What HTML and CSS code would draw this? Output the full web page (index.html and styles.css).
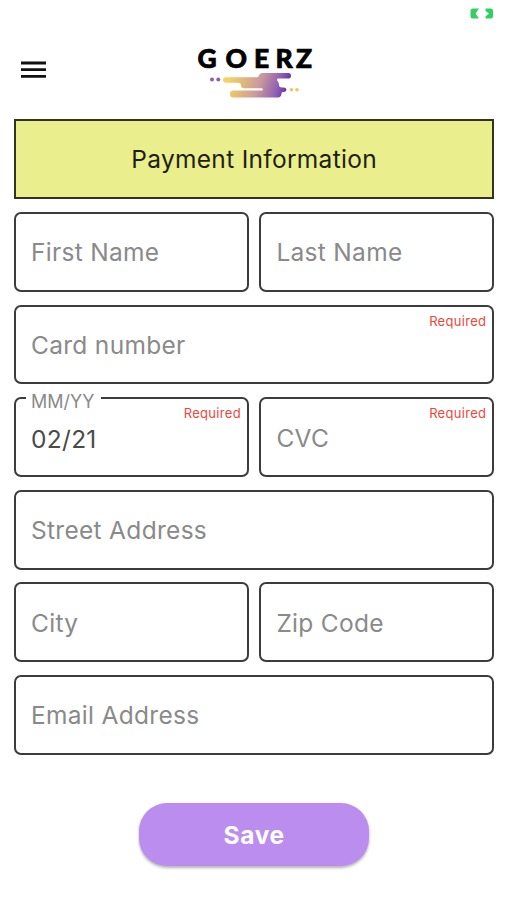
FILE: index.html
```html
<!DOCTYPE html>
<html lang="en">
<head>
  <meta charset="UTF-8">
  <meta name="viewport" content="width=device-width, initial-scale=1.0">
  <title>Payment Information</title>
  <link rel="stylesheet" href="styles.css">
</head>
<body>
  <div class="status-bar">
    <svg class="battery" width="24" height="12" viewBox="0 0 24 12">
      <path fill="#2fd062" d="M3 .5H9L5.500 5.500 9 10.500H3Q.5 10.500 .5 8V3Q.5 .5 3 .5Z"/>
      <path fill="#2fd062" d="M15.500 .5h5.500Q23 .5 23 3V8Q23 10.500 21 10.500H15.500V8.500L19 5.500 15.500 3Z"/>
    </svg>
  </div>

  <header class="header">
    <svg class="menu-icon" width="26" height="20" viewBox="0 0 26 20">
      <path d="M1 3h25M1 9.700h25M1 16.300h25" stroke="#111" stroke-width="2.800"/>
    </svg>
    <svg class="logo" width="124" height="64" viewBox="0 -10 124 64">
      <defs>
        <linearGradient id="brand" gradientUnits="userSpaceOnUse" x1="34" y1="32" x2="92" y2="50">
          <stop offset="0" stop-color="#f5d35c"/>
          <stop offset=".5" stop-color="#cc9b9c"/>
          <stop offset=".8" stop-color="#9462b2"/>
          <stop offset="1" stop-color="#5f2cb2"/>
        </linearGradient>
      </defs>
      <text class="logo-text" x="2.500 30.500 59 80.500 101" y="23">GOERZ</text>
      <path fill="url(#brand)" d="M31 32.300H62Q63.500 32.300 64 30.300T67 28H93.500Q96 28 96 30.800T93.500 33.500H83.500Q82 33.500 82 34.700T83 36.500Q84 38 84 40T87 42.500H89Q91.500 43 91.500 44.800T89 47H87.500Q86.500 47 86.300 49.500T83 52.500H38Q35 52.500 35 49T38 45.500H66.500Q68 45.500 68 44.500T66.500 43.200H49Q46 43 46 40.500T43 37.700H31Q28 37.500 28 35T31 32.300Z"/>
      <circle cx="17" cy="34.500" r="2" fill="#8b5fb5"/>
      <circle cx="23.300" cy="34.500" r="2" fill="#8b5fb5"/>
      <circle cx="96.500" cy="44.700" r="1.800" fill="#edc56a"/>
      <circle cx="102" cy="44.700" r="1.800" fill="#edc56a"/>
    </svg>
  </header>

  <main class="form">
    <h1 class="title">Payment Information</h1>

    <div class="row">
      <div class="field"><span class="placeholder">First Name</span></div>
      <div class="field"><span class="placeholder">Last Name</span></div>
    </div>
    <div class="row">
      <div class="field">
        <span class="placeholder">Card number</span>
        <span class="required">Required</span>
      </div>
    </div>
    <div class="row">
      <div class="field">
        <span class="floating-label">MM/YY</span>
        <span class="value">02/21</span>
        <span class="required">Required</span>
      </div>
      <div class="field">
        <span class="placeholder">CVC</span>
        <span class="required">Required</span>
      </div>
    </div>
    <div class="row">
      <div class="field"><span class="placeholder">Street Address</span></div>
    </div>
    <div class="row">
      <div class="field"><span class="placeholder">City</span></div>
      <div class="field"><span class="placeholder">Zip Code</span></div>
    </div>
    <div class="row">
      <div class="field"><span class="placeholder">Email Address</span></div>
    </div>

    <button class="save" type="button">Save</button>
  </main>
</body>
</html>
```

FILE: styles.css
```css
* {
  margin: 0;
  padding: 0;
  box-sizing: border-box;
}

body {
  height: 900px;
  background: #fff;
  font-family: Inter, "Liberation Sans", sans-serif;
  overflow: hidden;
}

.status-bar {
  display: flex;
  justify-content: flex-end;
  height: 35px;
  padding: 8px 13px 0 0;
}

.header {
  display: flex;
  height: 84.300px;
  padding-left: 20px;
}

.menu-icon {
  margin-top: 25px;
}

.logo {
  margin-left: 149px;
}

.logo-text {
  font-family: Lato, sans-serif;
  font-size: 26.500px;
  font-weight: 900;
  fill: #000;
  stroke: #000;
  stroke-width: 0.7px;
}

.form {
  display: flex;
  flex-direction: column;
  gap: 12.700px;
  padding: 0 12.700px 0 14px;
}

.title {
  display: flex;
  align-items: center;
  justify-content: center;
  height: 80px;
  background: #ebee8d;
  border: 2px solid #333322;
  color: #1f1f10;
  font-size: 24.500px;
  font-weight: 400;
  letter-spacing: 0.3px;
}

.row {
  display: flex;
  gap: 10.500px;
}

.field {
  position: relative;
  display: flex;
  align-items: center;
  flex: 1;
  height: 79.900px;
  padding: 1px 0 0 15px;
  border: 2px solid #3c3c3e;
  border-radius: 7px;
  font-size: 24.500px;
  letter-spacing: 0.3px;
}

.placeholder {
  color: #8a8a8a;
}

.value {
  color: #4a4a4a;
  padding-top: 2px;
}

/* sits over the border and hides it behind the text */
.floating-label {
  position: absolute;
  top: -8px;
  left: 10px;
  padding: 0 7px 0 5px;
  background: #fff;
  color: #8a8a8a;
  font-size: 18px;
  letter-spacing: 0;
  line-height: 22px;
}

.required {
  position: absolute;
  top: 6px;
  right: 6px;
  color: #f0463c;
  font-size: 13px;
  line-height: 16px;
}

.save {
  align-self: center;
  width: 230px;
  height: 63px;
  margin-top: 35.500px;
  padding-top: 1px;
  border: none;
  border-radius: 28px;
  background: #bb8dee;
  box-shadow: 0 2px 3px rgba(0, 0, 0, 0.3);
  color: #fff;
  font-family: inherit;
  font-size: 24.500px;
  font-weight: 700;
  letter-spacing: 0.7px;
}
```
